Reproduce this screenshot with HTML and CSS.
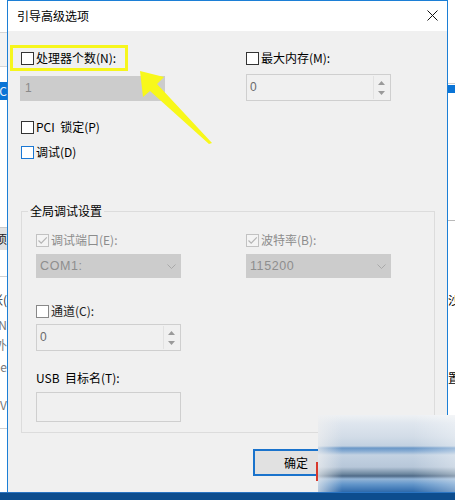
FILE: index.html
```html
<!DOCTYPE html>
<html lang="zh-CN">
<head>
<meta charset="utf-8">
<title>引导高级选项</title>
<link rel="stylesheet" href="styles.css">
</head>
<body>
<div class="screen">
  <div class="bg-left">
    <div class="bl bl-top"></div>
    <div class="bl bl-box"></div>
    <div class="bl bl-gap"></div>
    <div class="bl bl-sel"><span>(C</span></div>
    <div class="bl bl-white"></div>
    <div class="bl bl-gray"><span>项</span></div>
    <div class="bl bl-white2"></div>
    <div class="bl bl-row bl-r1"><span>张(</span></div>
    <div class="bl bl-row bl-r2 faint"><span>N</span></div>
    <div class="bl bl-row bl-r3 faint"><span>外</span></div>
    <div class="bl bl-row bl-r4 faint"><span>e</span></div>
    <div class="bl bl-row bl-r5 faint"><span>V</span></div>
    <div class="bl bl-end"></div>
  </div>

  <div class="dialog">
    <div class="titlebar">
      <span class="title">引导高级选项</span>
      <svg class="close" width="11" height="11" viewBox="0 0 11 11"><path d="M0.5 0.5 L10.5 10.5 M10.5 0.5 L0.5 10.5" stroke="#111" stroke-width="1" fill="none"/></svg>
    </div>
    <div class="body">
      <div class="top-grid">
        <div class="col">
          <label class="chk"><span class="cb"></span><span>处理器个数(N):</span></label>
          <div class="field field-dis">1</div>
          <label class="chk chk-pci"><span class="cb"></span><span>PCI&nbsp; 锁定(P)</span></label>
          <label class="chk chk-dbg"><span class="cb cb-focus"></span><span>调试(D)</span></label>
        </div>
        <div class="col">
          <label class="chk"><span class="cb"></span><span>最大内存(M):</span></label>
          <div class="spin spin-top">
            <span class="spin-val">0</span>
            <span class="spin-btns">
              <svg width="7" height="4" viewBox="0 0 7 4"><path d="M0 4 L3.5 0 L7 4 Z" fill="#9a9a9a"/></svg>
              <svg width="7" height="4" viewBox="0 0 7 4"><path d="M0 0 L3.5 4 L7 0 Z" fill="#9a9a9a"/></svg>
            </span>
          </div>
        </div>
      </div>

      <fieldset class="group">
        <legend>全局调试设置</legend>
        <div class="group-grid">
          <div class="col">
            <label class="chk dis"><span class="cb cb-dis"><svg width="11" height="11" viewBox="0 0 11 11"><path d="M1.5 5.5 L4.2 8.2 L9.8 2.3" stroke="#b5b5b5" stroke-width="1.2" fill="none"/></svg></span><span>调试端口(E):</span></label>
            <div class="combo"><span>COM1:</span><svg width="9" height="5" viewBox="0 0 9 5"><path d="M0.5 0.5 L4.5 4.5 L8.5 0.5" stroke="#a9a9a9" stroke-width="1" fill="none"/></svg></div>
            <label class="chk chk-chan"><span class="cb cb-light"></span><span>通道(C):</span></label>
            <div class="spin spin-chan">
              <span class="spin-val">0</span>
              <span class="spin-btns">
                <svg width="7" height="4" viewBox="0 0 7 4"><path d="M0 4 L3.5 0 L7 4 Z" fill="#9a9a9a"/></svg>
                <svg width="7" height="4" viewBox="0 0 7 4"><path d="M0 0 L3.5 4 L7 0 Z" fill="#9a9a9a"/></svg>
              </span>
            </div>
            <div class="usb-label">USB&nbsp; 目标名(T):</div>
            <div class="textbox"></div>
          </div>
          <div class="col">
            <label class="chk dis"><span class="cb cb-dis"><svg width="11" height="11" viewBox="0 0 11 11"><path d="M1.5 5.5 L4.2 8.2 L9.8 2.3" stroke="#b5b5b5" stroke-width="1.2" fill="none"/></svg></span><span>波特率(B):</span></label>
            <div class="combo"><span>115200</span><svg width="9" height="5" viewBox="0 0 9 5"><path d="M0.5 0.5 L4.5 4.5 L8.5 0.5" stroke="#a9a9a9" stroke-width="1" fill="none"/></svg></div>
          </div>
        </div>
      </fieldset>

      <div class="footer">
        <button class="btn btn-default">确定</button>
        <button class="btn">取消</button>
      </div>
    </div>
  </div>

  <div class="bg-right">
    <div class="br br-top"></div>
    <div class="br br-sel"></div>
    <div class="br br-mid"></div>
    <div class="br br-t1"><span>沙</span></div>
    <div class="br br-t2"><span>置</span></div>
  </div>

  <div class="taskbar"></div>

  <div class="highlight"></div>
  <svg class="arrow" width="455" height="500" viewBox="0 0 455 500">
    <polygon points="140,71 164,77 157,84 212,143 209,144 150,91 143,97" fill="#f8f81a"/>
  </svg>
  <div class="smear"></div>
  <div class="redline"></div>
</div>
</body>
</html>
```

FILE: styles.css
```css
* { box-sizing: border-box; }
html, body { margin: 0; padding: 0; }
body {
  width: 455px;
  height: 500px;
  overflow: hidden;
  background: #ffffff;
  font-family: "Noto Sans CJK SC", "Microsoft YaHei", sans-serif;
  font-size: 12px;
  line-height: 16px;
  color: #000;
}

.screen {
  position: relative;
  width: 455px;
  height: 500px;
  display: grid;
  grid-template-columns: 7px 441px 7px;
  grid-template-rows: 492px 8px;
}

/* ---------- background window, left ---------- */
.bg-left {
  overflow: hidden;
  background: #fff;
  display: flex;
  flex-direction: column;
}
.bl {
  display: flex;
  justify-content: flex-end;
  white-space: nowrap;
  flex-shrink: 0;
}
.bl span { flex-shrink: 0; }
.bl-top { height: 33px; border-bottom: 1px solid #d6d6d6; }
.bl-box { height: 34px; background: #f3f3f3; border-bottom: 1px solid #d6d6d6; }
.bl-gap { height: 15px; }
.bl-sel { height: 18px; background: #0a74d6; color: #e8f1fb; line-height: 18px; }
.bl-white { height: 128px; border-bottom: 1px solid #c9c9c9; }
.bl-gray { height: 22px; background: #e2e2e2; line-height: 22px; color: #222; }
.bl-white2 { height: 27px; border-bottom: 1px solid #d0d0d0; }
.bl-row { height: 16px; color: #333; }
.bl-r1 { margin-top: 15px; }
.bl-r2 { margin-top: 9px; }
.bl-r3 { margin-top: 4px; }
.bl-r4 { margin-top: 6px; }
.bl-r5 { margin-top: 22px; }
.faint { color: #777; }
.bl-end { margin-top: 15px; border-top: 1px solid #d0d0d0; flex: 1; }

/* ---------- background window, right ---------- */
.bg-right {
  overflow: hidden;
  background: #fff;
  display: flex;
  flex-direction: column;
}
.br { white-space: nowrap; flex-shrink: 0; }
.br-top { height: 84px; border-bottom: 1px solid #cfcfcf; }
.br-sel { height: 8px; margin-top: 1px; background: #0a74d6; }
.br-mid { height: 128px; border-bottom: 1px solid #b9b9b9; }
.br-t1 { height: 16px; margin-top: 71px; }
.br-t2 { height: 16px; margin-top: 62px; }

/* ---------- dialog ---------- */
.dialog {
  display: flex;
  flex-direction: column;
  border: 1px solid #1c7fd6;
  border-bottom: none;
  background: #f0f0f0;
}
.titlebar {
  height: 30px;
  background: #fff;
  display: flex;
  align-items: center;
  justify-content: space-between;
  padding: 0 9px 1px 9px;
}
.title { font-size: 12px; color: #000; }
.close { display: block; }

.body {
  flex: 1;
  padding: 19px 0 0 13px;
  display: flex;
  flex-direction: column;
}

.top-grid {
  display: grid;
  grid-template-columns: 225px 1fr;
}
.col { display: flex; flex-direction: column; align-items: flex-start; }

.chk {
  display: flex;
  align-items: center;
  gap: 2px;
  height: 16px;
  white-space: nowrap;
}
.cb {
  width: 13px;
  height: 13px;
  border: 1px solid #333;
  background: #fff;
  display: flex;
  align-items: center;
  justify-content: center;
  flex-shrink: 0;
}
.cb-focus { border-color: #1a78d4; }
.cb-light { border-color: #888; }
.cb-dis { border-color: #c2c2c2; background: #f4f4f4; }
.chk.dis { color: #8c8c8c; }

.chk-pci { margin-top: 18px; }
.chk-dbg { margin-top: 9px; }

.field {
  width: 145px;
  height: 25px;
  margin-top: 10px;
  margin-left: -1px;
  padding-left: 5px;
  line-height: 25px;
  font-family: "Liberation Sans", Arial, sans-serif;
}
.field-dis { background: #cccccc; color: #8a8a8a; }

.spin {
  width: 145px;
  height: 27px;
  border: 1px solid #cfcfcf;
  background: #f0f0f0;
  display: flex;
  align-items: stretch;
  justify-content: space-between;
}
.spin-top { margin-top: 8px; }
.spin-val {
  padding-left: 3px;
  line-height: 25px;
  color: #6a6a6a;
  font-family: "Liberation Sans", Arial, sans-serif;
}
.spin-btns {
  width: 16px;
  display: flex;
  flex-direction: column;
  align-items: center;
  justify-content: center;
  gap: 6px;
  border-left: 1px solid #e2e2e2;
  margin: 1px 1px 1px 0;
}
.spin-btns svg { display: block; }

/* ---------- group box ---------- */
.group {
  margin: 43px 0 0 0;
  width: 414px;
  border: 1px solid #dcdcdc;
  padding: 13px 0 10px 14px;
  min-width: 0;
}
.group legend {
  padding: 0 2px;
  margin-left: -8px;
  line-height: 16px;
  color: #000;
}
.group-grid {
  display: grid;
  grid-template-columns: 210px 1fr;
}
.combo {
  width: 145px;
  height: 24px;
  margin-top: 6px;
  background: #cccccc;
  display: flex;
  align-items: center;
  justify-content: space-between;
  padding: 0 5px 0 4px;
  color: #8e8e8e;
  font-family: "Liberation Sans", Arial, sans-serif;
  font-size: 12.5px;
  letter-spacing: 0.6px;
}
.combo svg { display: block; }
.chk-chan { margin-top: 25px; color: #222; }
.spin-chan { margin-top: 5px; }
.usb-label { margin-top: 19px; height: 16px; white-space: nowrap; }
.textbox {
  width: 145px;
  height: 30px;
  margin-top: 6px;
  border: 1px solid #cfcfcf;
  background: #f0f0f0;
}

/* ---------- footer ---------- */
.footer {
  margin-top: 16px;
  display: flex;
  justify-content: flex-end;
  gap: 7px;
  padding-right: 15px;
}
.btn {
  width: 86px;
  height: 27px;
  border: 1px solid #adadad;
  background: #e1e1e1;
  font-family: "Noto Sans CJK SC", "Microsoft YaHei", sans-serif;
  font-size: 12px;
  color: #000;
  padding: 0;
}
.btn-default { border: 2px solid #1a73cc; }

/* ---------- bottom taskbar ---------- */
.taskbar {
  grid-column: 1 / 4;
  background: #0d4d8e;
  border-top: 1px solid #2a74c2;
}

/* ---------- annotation overlays ---------- */
.highlight {
  position: absolute;
  left: 10px;
  top: 45px;
  width: 118px;
  height: 26px;
  border: 3px solid #f6f61c;
}
.arrow {
  position: absolute;
  left: 0;
  top: 0;
  pointer-events: none;
}
.smear {
  position: absolute;
  left: 318px;
  top: 415px;
  width: 137px;
  height: 77px;
  background:
    linear-gradient(to right, rgba(240,240,240,0.7) 0, rgba(240,240,240,0) 24px, rgba(255,255,255,0) 95px, rgba(255,255,255,0.35) 137px),
    linear-gradient(to bottom, #eef1f4 0, #dfe6ee 8px, #d2dce7 22px, #c2d1e1 31px, #6a97c7 33px, #86abd2 36px, #c3d2e2 40px, #b7c7d9 52px, #6d879f 59px, #4f6a87 61px, #93b4d6 64px, #6497cb 69px, #2f6aab 77px);
}
.redline {
  position: absolute;
  left: 316px;
  top: 462px;
  width: 2px;
  height: 19px;
  background: #d8392c;
}
```
